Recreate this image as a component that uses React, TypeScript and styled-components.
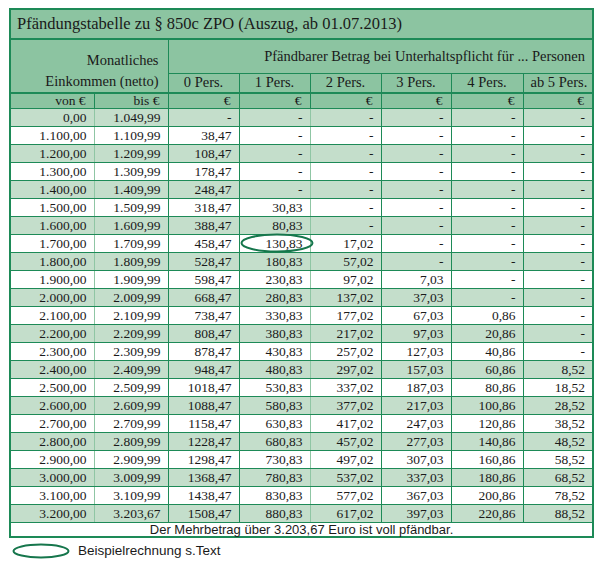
import React from "react";
import styled, { createGlobalStyle } from "styled-components";

const Global = createGlobalStyle`
  html, body { margin: 0; padding: 0; overflow: hidden; background: #fff; }
  body { font-family: "Liberation Serif", "DejaVu Serif", serif; color: #1a1a1a; }
`;

const HEAD = "#8cc4a1";
const SHADE = "#c4decb";
const LINE = "#1d8a57";
const LIGHTLINE = "#8fc6a4";

const Page = styled.div`
  padding: 8px 0 0 9px;
  width: 602px;
  height: 563px;
  box-sizing: border-box;
`;

const TableWrap = styled.div`
  position: relative;
  width: 583px;
`;

const Table = styled.table`
  border-collapse: collapse;
  table-layout: fixed;
  width: 583px;
  border: 2px solid ${LINE};
  font-size: 13.5px;
`;

const TitleCell = styled.th`
  background: ${HEAD};
  text-align: left;
  font-weight: normal;
  font-size: 16.5px;
  height: 28px;
  padding: 0 0 0 6px;
  border-bottom: 2px solid ${LINE};
`;

const HeadCell = styled.th<{ $align?: string; $h?: number }>`
  background: ${HEAD};
  font-weight: normal;
  font-size: 14.5px;
  text-align: ${(p) => p.$align || "center"};
  height: ${(p) => p.$h ?? 18}px;
  padding: 0 7px;
  border: 1px solid ${LINE};
  line-height: 1.2;
  white-space: nowrap;
`;

const IncomeHead = styled(HeadCell)`
  line-height: 21px;
  padding: 10px 9px 0 6px;
  vertical-align: top;
`;

const UnitCell = styled.th`
  background: ${HEAD};
  font-weight: normal;
  text-align: right;
  height: 14px;
  padding: 0 8px 0 0;
  border: 1px solid ${LINE};
  border-top-width: 2px;
  line-height: 14px;
`;

const Row = styled.tr<{ $shade: boolean }>`
  background: ${(p) => (p.$shade ? SHADE : "#fff")};
`;

const Cell = styled.td<{ $light?: boolean }>`
  text-align: right;
  height: 17px;
  line-height: 17px;
  padding: 0 7px 0 0;
  border-left: 1px solid ${(p) => (p.$light ? LIGHTLINE : LINE)};
  border-bottom: 1px solid ${LINE};
  white-space: nowrap;
`;

const FootCell = styled.td`
  text-align: center;
  font-family: "Liberation Sans", Arial, sans-serif;
  font-size: 13px;
  height: 13px;
  line-height: 13px;
  padding: 0;
  background: #fff;
  border-top: 1px solid ${LINE};
`;

const Oval = styled.svg`
  position: absolute;
  left: 231px;
  top: 225px;
  pointer-events: none;
`;

const Legend = styled.div`
  display: flex;
  align-items: center;
  gap: 8px;
  margin: 5px 0 0 3px;
  font-family: "Liberation Sans", Arial, sans-serif;
  font-size: 13.5px;
  line-height: 16px;
`;

const Note = styled.div`
  margin: 2px 0 0 70px;
  font-family: "Liberation Sans", Arial, sans-serif;
  font-size: 13px;
  line-height: 16px;
`;

const rows: string[][] = [
  ["0,00", "1.049,99", "-", "-", "-", "-", "-", "-"],
  ["1.100,00", "1.109,99", "38,47", "-", "-", "-", "-", "-"],
  ["1.200,00", "1.209,99", "108,47", "-", "-", "-", "-", "-"],
  ["1.300,00", "1.309,99", "178,47", "-", "-", "-", "-", "-"],
  ["1.400,00", "1.409,99", "248,47", "-", "-", "-", "-", "-"],
  ["1.500,00", "1.509,99", "318,47", "30,83", "-", "-", "-", "-"],
  ["1.600,00", "1.609,99", "388,47", "80,83", "-", "-", "-", "-"],
  ["1.700,00", "1.709,99", "458,47", "130,83", "17,02", "-", "-", "-"],
  ["1.800,00", "1.809,99", "528,47", "180,83", "57,02", "-", "-", "-"],
  ["1.900,00", "1.909,99", "598,47", "230,83", "97,02", "7,03", "-", "-"],
  ["2.000,00", "2.009,99", "668,47", "280,83", "137,02", "37,03", "-", "-"],
  ["2.100,00", "2.109,99", "738,47", "330,83", "177,02", "67,03", "0,86", "-"],
  ["2.200,00", "2.209,99", "808,47", "380,83", "217,02", "97,03", "20,86", "-"],
  ["2.300,00", "2.309,99", "878,47", "430,83", "257,02", "127,03", "40,86", "-"],
  ["2.400,00", "2.409,99", "948,47", "480,83", "297,02", "157,03", "60,86", "8,52"],
  ["2.500,00", "2.509,99", "1018,47", "530,83", "337,02", "187,03", "80,86", "18,52"],
  ["2.600,00", "2.609,99", "1088,47", "580,83", "377,02", "217,03", "100,86", "28,52"],
  ["2.700,00", "2.709,99", "1158,47", "630,83", "417,02", "247,03", "120,86", "38,52"],
  ["2.800,00", "2.809,99", "1228,47", "680,83", "457,02", "277,03", "140,86", "48,52"],
  ["2.900,00", "2.909,99", "1298,47", "730,83", "497,02", "307,03", "160,86", "58,52"],
  ["3.000,00", "3.009,99", "1368,47", "780,83", "537,02", "337,03", "180,86", "68,52"],
  ["3.100,00", "3.109,99", "1438,47", "830,83", "577,02", "367,03", "200,86", "78,52"],
  ["3.200,00", "3.203,67", "1508,47", "880,83", "617,02", "397,03", "220,86", "88,52"],
];

const widths = [84, 74, 71, 71, 71, 70, 72, 70];
const persons = ["0 Pers.", "1 Pers.", "2 Pers.", "3 Pers.", "4 Pers.", "ab 5 Pers."];

export default function App() {
  return (
    <Page>
      <Global />
      <TableWrap>
        <Table>
          <colgroup>
            {widths.map((w, i) => (
              <col key={i} style={{ width: w }} />
            ))}
          </colgroup>
          <thead>
            <tr>
              <TitleCell colSpan={8}>
                Pfändungstabelle zu § 850c ZPO (Auszug, ab 01.07.2013)
              </TitleCell>
            </tr>
            <tr>
              <IncomeHead colSpan={2} rowSpan={2} $align="right">
                Monatliches
                <br />
                Einkommen (netto)
              </IncomeHead>
              <HeadCell colSpan={6} $align="right" $h={33}>
                Pfändbarer Betrag bei Unterhaltspflicht für ... Personen
              </HeadCell>
            </tr>
            <tr>
              {persons.map((p) => (
                <HeadCell key={p} $h={18}>
                  {p}
                </HeadCell>
              ))}
            </tr>
            <tr>
              <UnitCell>von €</UnitCell>
              <UnitCell>bis €</UnitCell>
              {persons.map((p) => (
                <UnitCell key={p}>€</UnitCell>
              ))}
            </tr>
          </thead>
          <tbody>
            {rows.map((r, i) => (
              <Row key={i} $shade={i % 2 === 0}>
                {r.map((v, j) => (
                  <Cell key={j} $light={j === 1 || j === 4}>
                    {v}
                  </Cell>
                ))}
              </Row>
            ))}
            <tr>
              <FootCell colSpan={8}>
                Der Mehrbetrag über 3.203,67 Euro ist voll pfändbar.
              </FootCell>
            </tr>
          </tbody>
        </Table>
        <Oval width="74" height="20" viewBox="0 0 74 20">
          <ellipse cx="37" cy="10" rx="35.5" ry="8.5" fill="none" stroke="#16764c" strokeWidth="2" />
        </Oval>
      </TableWrap>
      <Legend>
        <svg width="58" height="16" viewBox="0 0 58 16">
          <ellipse cx="29" cy="8" rx="27.5" ry="6.5" fill="none" stroke="#16764c" strokeWidth="2" />
        </svg>
        <span>Beispielrechnung s.Text</span>
      </Legend>
      <Note>innerhalb der Tabelle wird der pfändbare Betrag abgelesen</Note>
    </Page>
  );
}
